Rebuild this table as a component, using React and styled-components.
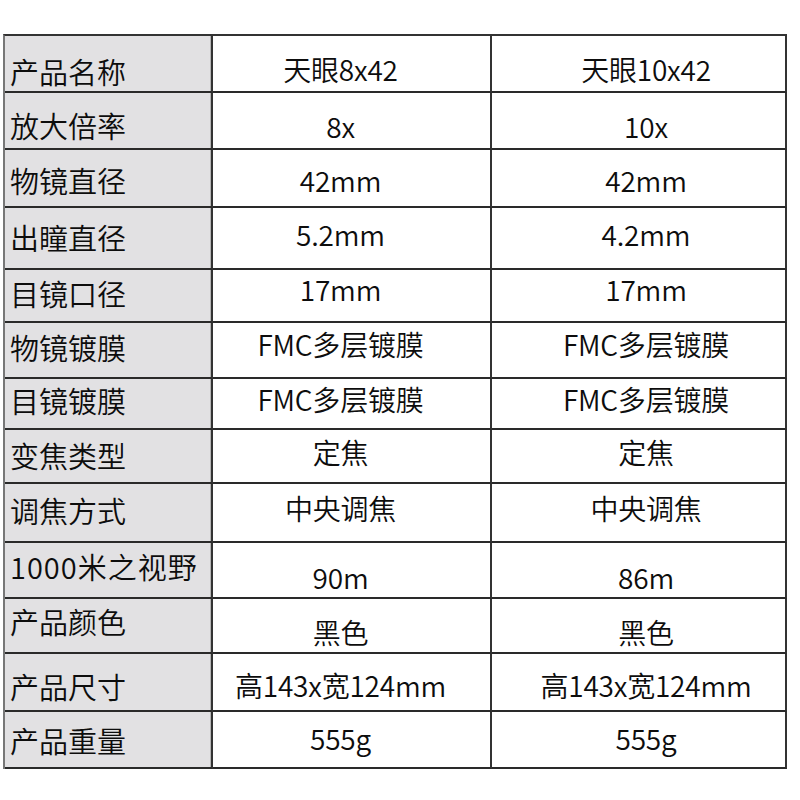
import React from "react";
import styled, { createGlobalStyle } from "styled-components";

const GlobalStyle = createGlobalStyle`
  body {
    margin: 0;
    background: #fff;
    font-family: "Noto Sans CJK SC", "Noto Sans", sans-serif;
    font-weight: 350;
    color: #0d0d0d;
  }
`;

const Page = styled.div`
  padding: 34px 0 0 3px;
`;

const SpecTable = styled.div`
  display: grid;
  grid-template-columns: 208px 279px 295px;
  width: max-content;
  border-top: 2px solid #333;
  border-left: 2px solid #777;
`;

const Cell = styled.div`
  box-sizing: border-box;
  height: ${(p) => p.$h}px;
  display: flex;
  align-items: center;
  border-right: 2px solid #333;
  border-bottom: 2px solid #2a2a2a;
  line-height: 1;
  white-space: nowrap;
  padding-top: ${(p) => Math.max(0, p.$shift * 2)}px;
  padding-bottom: ${(p) => Math.max(0, -p.$shift * 2)}px;
`;

const LabelCell = styled(Cell)`
  background: #e2e1e3;
  padding-left: 5px;
  font-size: 29px;
  letter-spacing: ${(p) => (p.$wide ? 1 : 0)}px;
  box-shadow: inset -1px 0 0 #b5b5b5;
`;

const ValueCell = styled(Cell)`
  justify-content: center;
  font-size: 28px;
  letter-spacing: -0.2px;
  padding-left: ${(p) => (p.$col === 2 ? 15 : 0)}px;
  padding-right: ${(p) => (p.$col === 1 ? 22 : 0)}px;
`;

const rows = [
  { label: "产品名称", a: "天眼8x42", b: "天眼10x42", h: 57, ls: 8, vs: 5.5 },
  { label: "放大倍率", a: "8x", b: "10x", h: 57, ls: 5, vs: 5 },
  { label: "物镜直径", a: "42mm", b: "42mm", h: 58, ls: 2.5, vs: 2 },
  { label: "出瞳直径", a: "5.2mm", b: "4.2mm", h: 62, ls: -1, vs: -4.5 },
  { label: "目镜口径", a: "17mm", b: "17mm", h: 53, ls: -2, vs: -7 },
  { label: "物镜镀膜", a: "FMC多层镀膜", b: "FMC多层镀膜", h: 56, ls: -3, vs: -6.5 },
  { label: "目镜镀膜", a: "FMC多层镀膜", b: "FMC多层镀膜", h: 51, ls: -3, vs: -5 },
  { label: "变焦类型", a: "定焦", b: "定焦", h: 54, ls: -0.5, vs: -4 },
  { label: "调焦方式", a: "中央调焦", b: "中央调焦", h: 59, ls: -2, vs: -4.5 },
  { label: "1000米之视野", a: "90m", b: "86m", h: 56, ls: -3.5, vs: 7, wide: true },
  { label: "产品颜色", a: "黑色", b: "黑色", h: 55, ls: -4, vs: 6 },
  { label: "产品尺寸", a: "高143x宽124mm", b: "高143x宽124mm", h: 58, ls: 4, vs: 3 },
  { label: "产品重量", a: "555g", b: "555g", h: 57, ls: 1, vs: -2 },
];

export default function App() {
  return (
    <Page>
      <GlobalStyle />
      <SpecTable>
        {rows.map((r) => (
          <React.Fragment key={r.label}>
            <LabelCell $h={r.h} $shift={r.ls} $wide={r.wide}>
              {r.label}
            </LabelCell>
            <ValueCell $h={r.h} $shift={r.vs} $col={1}>
              {r.a}
            </ValueCell>
            <ValueCell $h={r.h} $shift={r.vs} $col={2}>
              {r.b}
            </ValueCell>
          </React.Fragment>
        ))}
      </SpecTable>
    </Page>
  );
}
